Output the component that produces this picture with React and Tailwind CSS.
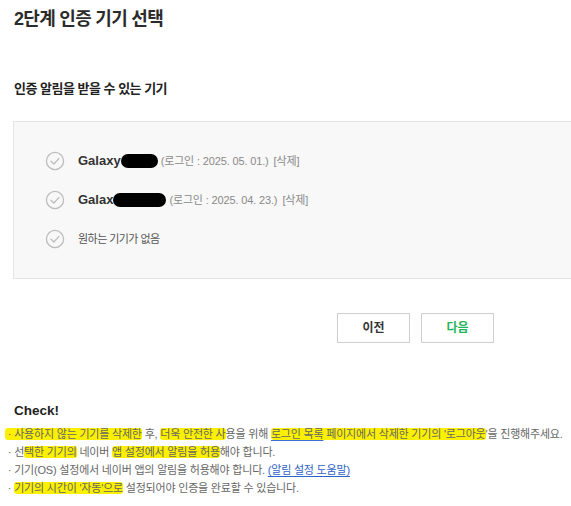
import React from 'react';

const FONT = { fontFamily: '"Liberation Sans", "Noto Sans CJK KR", sans-serif' };

function CheckCircle() {
  return (
    <svg width="20" height="20" viewBox="0 0 20 20" className="shrink-0">
      <circle cx="10" cy="10" r="8.6" fill="none" stroke="#bdbdbd" strokeWidth="1.3" />
      <path d="M6 10.2 L8.9 13 L14 7.4" fill="none" stroke="#bdbdbd" strokeWidth="1.3" strokeLinecap="round" strokeLinejoin="round" />
    </svg>
  );
}

function Blob({ w }) {
  return <span className={`inline-block h-[14px] rounded-full bg-black align-[-2px] ${w}`} />;
}

function Mark({ children }) {
  return <span className="bg-[#fbf000] rounded-[3px]">{children}</span>;
}

const devices = [
  { name: 'Galaxy', blob: 'w-[37px]', date: '2025. 05. 01.' },
  { name: 'Galax', blob: 'w-[53px]', date: '2025. 04. 23.' },
];

export default function App() {
  return (
    <div className="w-[571px] h-[506px] overflow-hidden bg-white px-[13px] pt-[7px] text-[#333]" style={FONT}>
      <h1 className="ml-px text-[18px] leading-[24px] font-bold tracking-[-0.7px] text-[#2b2b2b]">2단계 인증 기기 선택</h1>

      <h2 className="ml-px mt-[48px] text-[13px] leading-[20px] font-bold tracking-[-0.5px] text-[#222]">인증 알림을 받을 수 있는 기기</h2>

      <div className="mt-[22px] w-[600px] h-[158px] border border-[#e4e4e4] bg-[#f8f8f8] pl-[31px] pt-[29px] flex flex-col gap-[19px]">
        {devices.map((d, i) => (
          <div key={i} className="flex items-center h-[20px]">
            <CheckCircle />
            <div className="ml-[13px] flex items-center whitespace-nowrap">
              <span className="text-[13px] font-bold text-[#333]">{d.name}</span>
              <Blob w={d.blob} />
              <span className="ml-[3px] text-[11px] tracking-[-0.15px] text-[#8a8a8a]">(로그인 : {d.date})</span>
              <span className="ml-[5px] text-[11px] tracking-[-0.15px] text-[#8a8a8a]">[삭제]</span>
            </div>
          </div>
        ))}
        <div className="flex items-center h-[20px]">
          <CheckCircle />
          <span className="ml-[13px] text-[11px] tracking-[-0.55px] text-[#555]">원하는 기기가 없음</span>
        </div>
      </div>

      <div className="mt-[34px] flex gap-[11px] pl-[324px]">
        <button className="w-[73px] h-[30px] border border-[#cfcfcf] bg-white text-[12px] font-bold text-[#333]">이전</button>
        <button className="w-[73px] h-[30px] border border-[#cfcfcf] bg-white text-[12px] font-bold text-[#1fb35a]">다음</button>
      </div>

      <h3 className="ml-px mt-[58px] text-[13.5px] leading-[20px] font-bold text-[#222]">Check!</h3>

      <ul className="ml-[-8px] mt-[4px] text-[11px] leading-[18px] tracking-[-0.2px] text-[#666] whitespace-nowrap">
        <li>
          <Mark>&nbsp;· 사용하지 않는 기기를 삭제한</Mark> 후, <Mark>더욱 안전한 사</Mark>용을 위해{' '}
          <Mark>
            <span className="underline decoration-[#3a6fd8] underline-offset-2">로그인 목록</span> 페이지에서 삭제한 기기의 '로그아웃
          </Mark>
          '을 진행해주세요.
        </li>
        <li>
          &nbsp;· 선<Mark>택한 기기의</Mark> 네이버 <Mark>앱 설정에서 알림을 허용</Mark>해야 합니다.
        </li>
        <li>
          &nbsp;· 기기(OS) 설정에서 네이버 앱의 알림을 허용해야 합니다.{' '}
          <span className="text-[#2f63c9] underline underline-offset-2">(알림 설정 도움말)</span>
        </li>
        <li>
          &nbsp;· <Mark>기기의 시간이 '자동'으로</Mark> 설정되어야 인증을 완료할 수 있습니다.
        </li>
      </ul>
    </div>
  );
}
